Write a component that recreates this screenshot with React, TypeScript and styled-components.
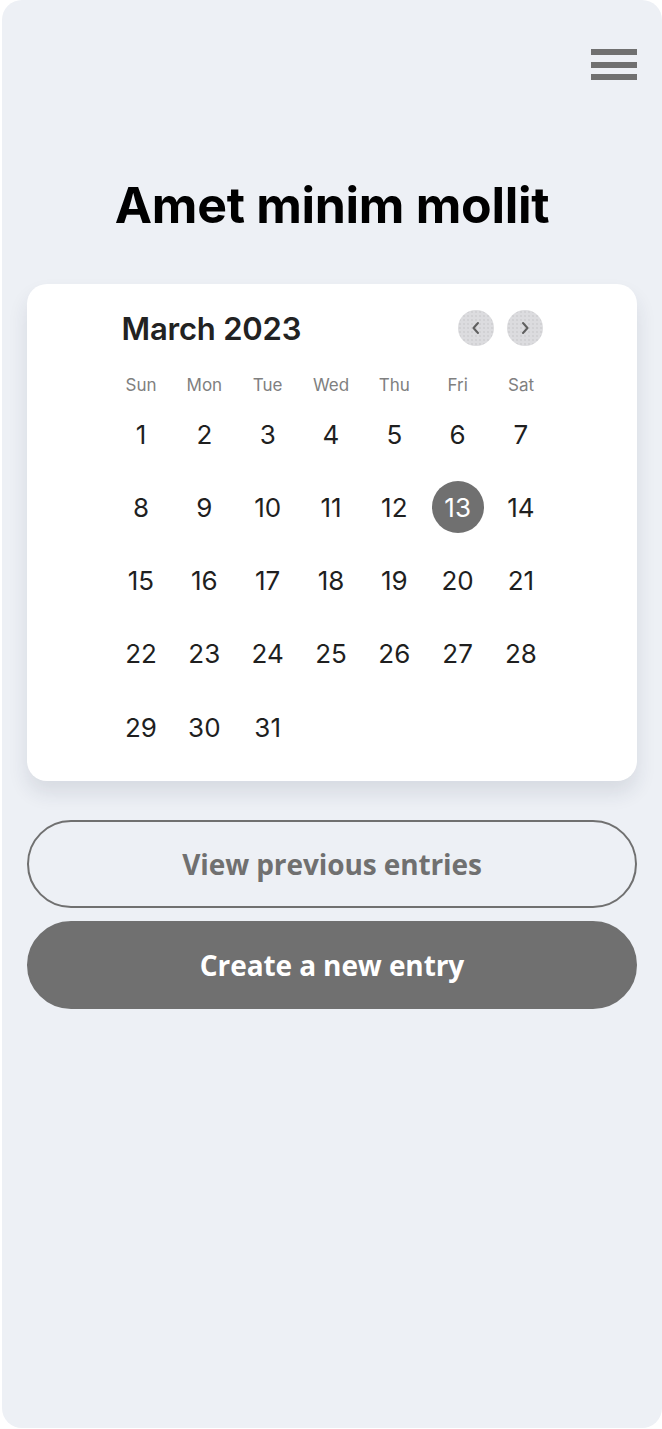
import React from 'react';
import styled, {createGlobalStyle} from 'styled-components';

const GlobalStyle = createGlobalStyle`
  html, body {
    margin: 0;
    padding: 0;
    background: #ffffff;
  }
  * {
    box-sizing: border-box;
  }
`;

const Frame = styled.div`
  margin-left: 2px;
  width: 660px;
  height: 1428px;
  border-radius: 20px;
  background: #edf0f5;
  display: flex;
  flex-direction: column;
  padding: 49px 25px 0 25px;
  font-family: Inter, 'Noto Sans', sans-serif;
`;

const TopBar = styled.div`
  display: flex;
  justify-content: flex-end;
`;

const MenuButton = styled.button`
  display: flex;
  flex-direction: column;
  gap: 6.5px;
  padding: 0;
  border: none;
  background: none;
  cursor: pointer;
`;

const MenuBar = styled.span`
  display: block;
  width: 46px;
  height: 6px;
  background: #707070;
`;

const Title = styled.h1`
  margin: 97px 0 0;
  text-align: center;
  font-size: 50px;
  line-height: 56px;
  font-weight: 700;
  color: #000000;
  letter-spacing: -0.3px;
`;

const Card = styled.section`
  margin-top: 51px;
  background: #ffffff;
  border-radius: 20px;
  box-shadow: 0 12px 20px rgba(40, 45, 70, 0.11);
  padding: 26px 0 28px;
  display: flex;
  flex-direction: column;
  align-items: center;
`;

const CardHeader = styled.div`
  width: 421px;
  height: 36px;
  display: flex;
  align-items: center;
  justify-content: space-between;
`;

const Month = styled.h2`
  margin: 0;
  font-size: 31px;
  font-weight: 600;
  color: #222222;
  letter-spacing: -0.2px;
`;

const NavGroup = styled.div`
  display: flex;
  gap: 13px;
`;

const NavButton = styled.button`
  width: 36px;
  height: 36px;
  border-radius: 50%;
  border: none;
  padding: 0;
  background-color: #dcdcdf;
  background-image: radial-gradient(rgba(150, 150, 155, 0.35) 0.6px, transparent 0.8px);
  background-size: 4px 4px;
  display: flex;
  align-items: center;
  justify-content: center;
  cursor: pointer;
`;

const Grid = styled.div<{$rowHeight: number; $top: number}>`
  margin-top: ${(p) => p.$top}px;
  display: grid;
  grid-template-columns: repeat(7, 63.33px);
  grid-auto-rows: ${(p) => p.$rowHeight}px;
  row-gap: 21.3px;
  transform: translateX(-1px);
`;

const WeekDay = styled.div`
  display: flex;
  align-items: center;
  justify-content: center;
  font-size: 17px;
  color: #808080;
`;

const Day = styled.div`
  display: flex;
  align-items: center;
  justify-content: center;
`;

const DayNumber = styled.span<{$selected?: boolean}>`
  width: 52px;
  height: 52px;
  border-radius: 50%;
  display: flex;
  align-items: center;
  justify-content: center;
  font-size: 26px;
  color: ${(p) => (p.$selected ? '#ffffff' : '#1f1f1f')};
  background: ${(p) => (p.$selected ? '#707070' : 'transparent')};
`;

const Actions = styled.div`
  margin-top: 39px;
  display: flex;
  flex-direction: column;
  gap: 13px;
`;

const PillButton = styled.button<{$filled?: boolean}>`
  height: 88px;
  width: 100%;
  border-radius: 44px;
  border: 2px solid #707070;
  background: ${(p) => (p.$filled ? '#707070' : 'transparent')};
  color: ${(p) => (p.$filled ? '#ffffff' : '#707070')};
  font-family: 'Open Sans', 'Noto Sans', sans-serif;
  font-size: 28px;
  font-weight: 700;
  letter-spacing: -0.1px;
  cursor: pointer;
`;

const Chevron = ({dir}: {dir: 'left' | 'right'}) => (
  <svg width="12" height="14" viewBox="0 0 12 14" fill="none">
    <path
      d={dir === 'left' ? 'M8 2 L3.5 7 L8 12' : 'M4 2 L8.5 7 L4 12'}
      stroke="#5f5f5f"
      strokeWidth="2"
      strokeLinecap="round"
      strokeLinejoin="round"
    />
  </svg>
);

const weekDays = ['Sun', 'Mon', 'Tue', 'Wed', 'Thu', 'Fri', 'Sat'];
const days = Array.from({length: 31}, (_, i) => i + 1);
const selectedDay = 13;

const App = () => {
  return (
    <>
      <GlobalStyle />
      <Frame>
        <TopBar>
          <MenuButton aria-label="Menu">
            <MenuBar />
            <MenuBar />
            <MenuBar />
          </MenuButton>
        </TopBar>

        <Title>Amet minim mollit</Title>

        <Card>
          <CardHeader>
            <Month>March 2023</Month>
            <NavGroup>
              <NavButton aria-label="Previous month">
                <Chevron dir="left" />
              </NavButton>
              <NavButton aria-label="Next month">
                <Chevron dir="right" />
              </NavButton>
            </NavGroup>
          </CardHeader>

          <Grid $rowHeight={24} $top={27}>
            {weekDays.map((d) => (
              <WeekDay key={d}>{d}</WeekDay>
            ))}
          </Grid>

          <Grid $rowHeight={52} $top={11}>
            {days.map((d) => (
              <Day key={d}>
                <DayNumber $selected={d === selectedDay}>{d}</DayNumber>
              </Day>
            ))}
          </Grid>
        </Card>

        <Actions>
          <PillButton>View previous entries</PillButton>
          <PillButton $filled>Create a new entry</PillButton>
        </Actions>
      </Frame>
    </>
  );
};

export default App;
